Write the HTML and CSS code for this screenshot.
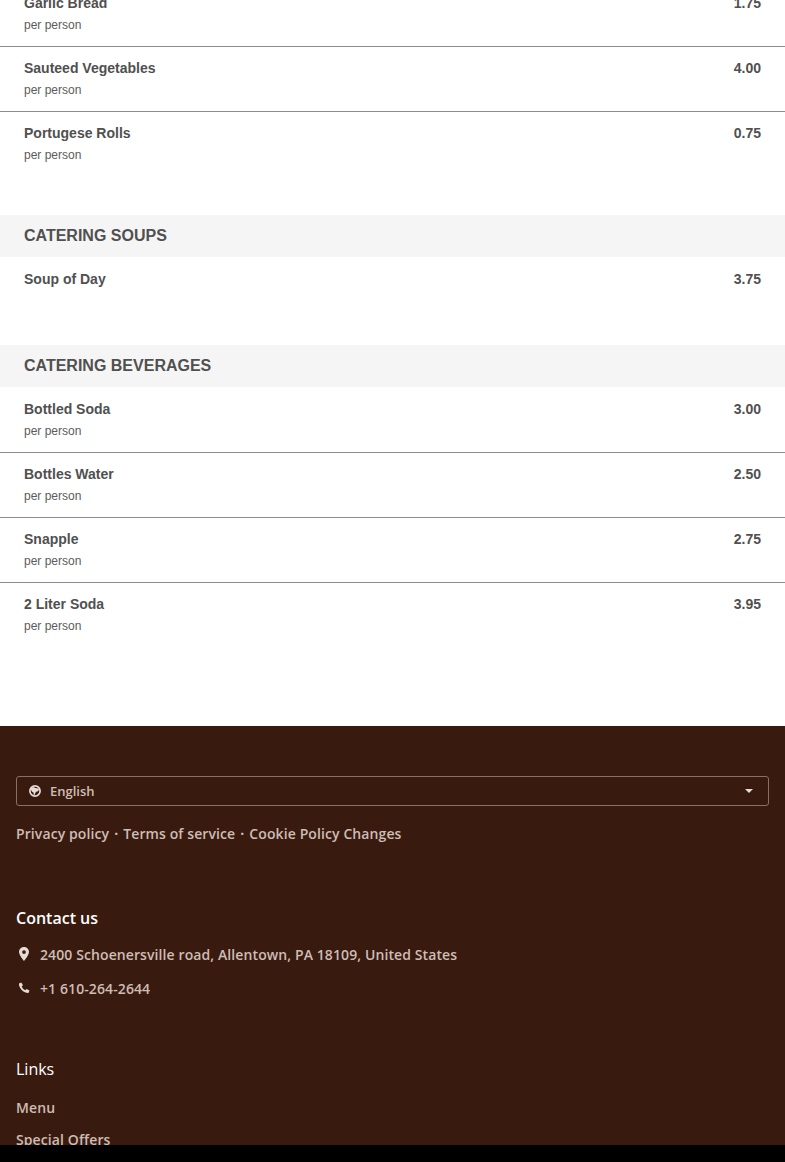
FILE: index.html
```html
<!DOCTYPE html>
<html lang="en">
<head>
  <meta charset="UTF-8">
  <meta name="viewport" content="width=device-width, initial-scale=1.0">
  <title>Catering Menu</title>
  <link rel="stylesheet" href="styles.css">
</head>
<body>
  <div class="page">
    <main class="menu">
      <section class="menu-section">
        <div class="item">
          <div class="item-line"><span>Garlic Bread</span><span>1.75</span></div>
          <p class="item-note">per person</p>
        </div>
        <div class="item">
          <div class="item-line"><span>Sauteed Vegetables</span><span>4.00</span></div>
          <p class="item-note">per person</p>
        </div>
        <div class="item">
          <div class="item-line"><span>Portugese Rolls</span><span>0.75</span></div>
          <p class="item-note">per person</p>
        </div>
      </section>

      <section class="menu-section">
        <h2 class="section-title">CATERING SOUPS</h2>
        <div class="item item-plain">
          <div class="item-line"><span>Soup of Day</span><span>3.75</span></div>
        </div>
      </section>

      <section class="menu-section">
        <h2 class="section-title">CATERING BEVERAGES</h2>
        <div class="item">
          <div class="item-line"><span>Bottled Soda</span><span>3.00</span></div>
          <p class="item-note">per person</p>
        </div>
        <div class="item">
          <div class="item-line"><span>Bottles Water</span><span>2.50</span></div>
          <p class="item-note">per person</p>
        </div>
        <div class="item">
          <div class="item-line"><span>Snapple</span><span>2.75</span></div>
          <p class="item-note">per person</p>
        </div>
        <div class="item">
          <div class="item-line"><span>2 Liter Soda</span><span>3.95</span></div>
          <p class="item-note">per person</p>
        </div>
      </section>
    </main>

    <footer class="footer">
      <div class="lang-select">
        <svg class="lang-icon" viewBox="0 0 24 24" width="12" height="12">
          <circle cx="12" cy="12" r="10.200" fill="none" stroke="currentColor" stroke-width="3.400"/>
          <path fill="currentColor" d="M3 7l6-3 4 2 6 1 1 3-3 3-3 .5-1.500 3-1.500 4-1.500-.5-.5-5-3-1.500-1.500-3z"/>
        </svg>
        <span class="lang-name">English</span>
        <span class="caret"></span>
      </div>

      <p class="legal">
        <a href="#">Privacy policy</a><span class="legal-sep">·</span><a href="#">Terms of service</a><span class="legal-sep">·</span><a href="#">Cookie Policy Changes</a>
      </p>

      <h3 class="footer-title contact-title">Contact us</h3>
      <div class="contact-row">
        <svg class="contact-icon" viewBox="0 0 24 24" width="16" height="14">
          <path fill="currentColor" fill-rule="evenodd" d="M12 0C7 0 3.500 3.800 3.500 8.500 3.500 14 12 24 12 24s8.500-10 8.500-15.500C20.500 3.800 17 0 12 0zm0 5.500a3.200 3.200 0 1 1 0 6.400 3.200 3.200 0 0 1 0-6.400z"/>
        </svg>
        <span>2400 Schoenersville road, Allentown, PA 18109, United States</span>
      </div>
      <div class="contact-row">
        <svg class="contact-icon" viewBox="0 0 24 24" width="16" height="12">
          <path fill="currentColor" d="M6.500 1L2 3c-.8 7 7 19 19 19l2-5-6-3-2.500 2.500C11 15 8.500 12 7.500 8.500L10 6.500z"/>
        </svg>
        <span>+1 610-264-2644</span>
      </div>

      <h3 class="footer-title links-title">Links</h3>
      <a class="footer-link" href="#">Menu</a>
      <a class="footer-link" href="#">Special Offers</a>
    </footer>

    <div class="bottom-bar"></div>
  </div>
</body>
</html>
```

FILE: styles.css
```css
html, body {
  margin: 0;
  padding: 0;
  height: 100%;
  overflow: hidden;
}

body {
  font-family: "Liberation Sans", Arial, sans-serif;
  background-color: #ffffff;
  color: #505050;
}

.page {
  position: relative;
  height: 1162px;
  overflow: hidden;
}

.menu {
  margin-top: -18px;
  padding-bottom: 40px;
}

.menu-section {
  margin-bottom: 39px;
}

.section-title {
  margin: 0 0 1px;
  padding: 0 24px;
  height: 42px;
  line-height: 42px;
  font-size: 16px;
  font-weight: bold;
  background-color: #f5f5f5;
  color: #505050;
}

.item {
  padding: 12px 24px;
  border-bottom: 1px solid #8c8c8c;
}

.item:last-child {
  border-bottom: none;
}

.item-plain {
  height: 24px;
}

.item-line {
  display: flex;
  justify-content: space-between;
  font-size: 14px;
  line-height: 18px;
  font-weight: bold;
}

.item-note {
  margin: 4px 0 0;
  font-size: 12px;
  line-height: 18px;
  color: #5c5c5c;
}

.footer {
  background-color: #391a0f;
  padding: 50px 16px 0;
  height: 500px;
  font-family: "Open Sans", sans-serif;
  font-size: 14px;
  font-weight: 600;
  letter-spacing: 0.1px;
  color: #cdbdb4;
}

.footer a {
  color: #cdbdb4;
  text-decoration: none;
}

.lang-select {
  display: flex;
  align-items: center;
  box-sizing: border-box;
  height: 30px;
  padding: 0 15px 0 12px;
  border: 1px solid #8b6f62;
  border-radius: 3px;
  font-size: 13px;
  letter-spacing: 0;
}

.lang-icon {
  color: #e6dcd6;
}

.lang-name {
  margin-left: 9px;
  flex: 1;
}

.caret {
  width: 0;
  height: 0;
  border-left: 4px solid transparent;
  border-right: 4px solid transparent;
  border-top: 4px solid #e6dcd6;
}

.legal {
  margin: 18px 0 0;
  line-height: 20px;
}

.legal-sep {
  margin: 0 5px;
  font-weight: 700;
}

.footer-title {
  margin: 0;
  font-size: 16px;
  font-weight: 600;
  line-height: 22px;
  letter-spacing: 0;
  color: #ffffff;
}

.contact-title {
  margin-top: 63px;
}

.contact-row {
  display: flex;
  align-items: center;
  gap: 8px;
  height: 20px;
  margin-top: 14px;
}

.contact-title + .contact-row {
  margin-top: 15px;
}

.contact-icon {
  flex: none;
  color: #e6dcd6;
}

.links-title {
  margin-top: 60px;
  font-weight: 500;
}

.footer-link {
  display: block;
  margin-top: 12px;
  line-height: 20px;
}

.links-title + .footer-link {
  margin-top: 18px;
}

.bottom-bar {
  position: absolute;
  left: 0;
  right: 0;
  bottom: 0;
  height: 17px;
  background-color: #000000;
}
```
